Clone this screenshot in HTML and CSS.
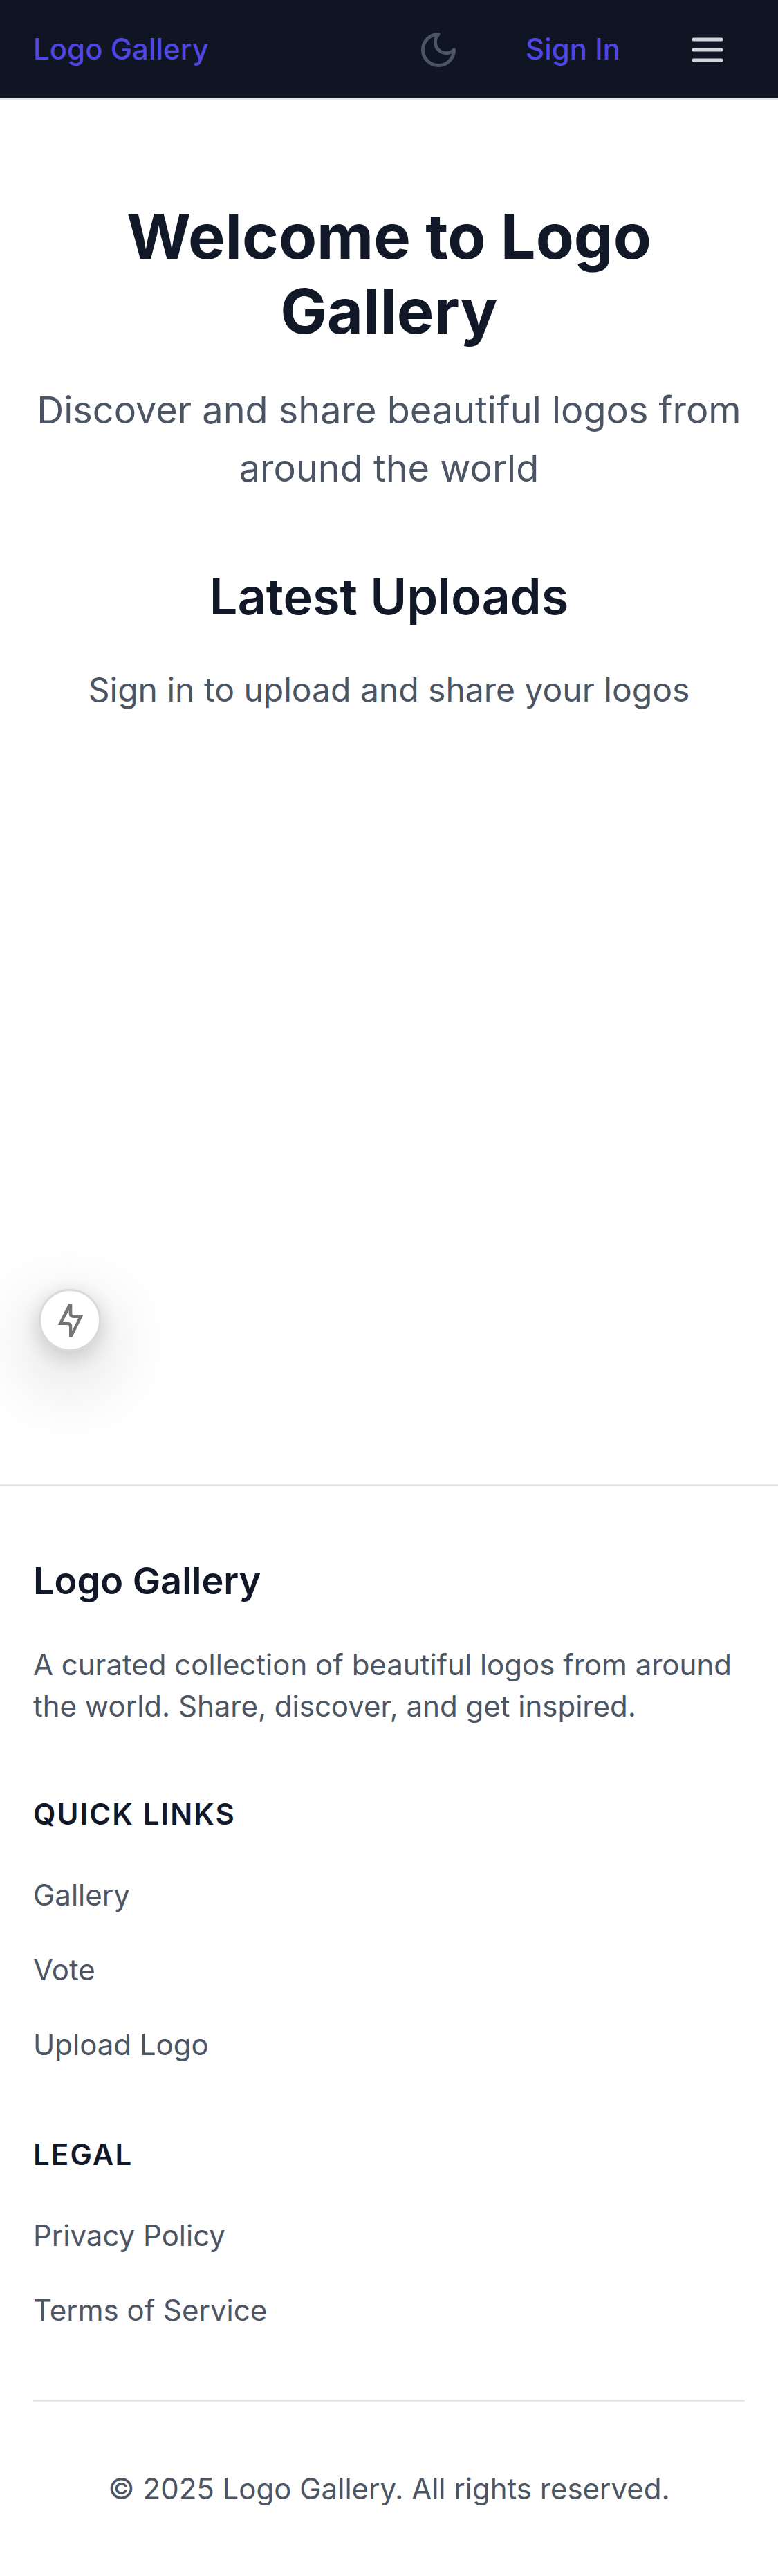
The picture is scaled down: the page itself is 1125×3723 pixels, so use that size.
FILE: index.html
```html
<!DOCTYPE html>
<html lang="en">
<head>
<meta charset="utf-8">
<title>Logo Gallery</title>
<link rel="stylesheet" href="styles.css">
</head>
<body>
<header class="header">
  <a class="brand">Logo Gallery</a>
  <nav class="nav">
    <svg class="icon moon" viewBox="0 0 24 24"><path d="M12 3a6 6 0 0 0 9 9 9 9 0 1 1-9-9Z"/></svg>
    <a class="signin">Sign In</a>
    <svg class="icon menu" viewBox="0 0 24 24"><path d="M4 6h16M4 12h16M4 18h16"/></svg>
  </nav>
</header>
<main class="main">
  <h1 class="title">Welcome to Logo Gallery</h1>
  <p class="lead">Discover and share beautiful logos from around the world</p>
  <h2 class="subtitle">Latest Uploads</h2>
  <p class="hint">Sign in to upload and share your logos</p>
</main>
<footer class="footer">
  <h3 class="footer-brand">Logo Gallery</h3>
  <p class="about">A curated collection of beautiful logos from around the world. Share, discover, and get inspired.</p>
  <h4 class="group">Quick Links</h4>
  <ul class="links"><li>Gallery</li><li>Vote</li><li>Upload Logo</li></ul>
  <h4 class="group">Legal</h4>
  <ul class="links"><li>Privacy Policy</li><li>Terms of Service</li></ul>
  <p class="copyright">© 2025 Logo Gallery. All rights reserved.</p>
</footer>
<div class="indicator">
  <svg class="bolt" viewBox="0 0 38 50"><path fill-rule="evenodd" d="M16.300 1H21.300V15.500Q21.300 17.700 23.500 17.700H37.300L21.700 49H17V34.500Q17 32 14.700 32H.700ZM16.700 11V15.500Q16.700 22 23.500 22H30.300L21.300 40.500V34.500Q21.300 27.700 14.700 27.700H7.700Z"/></svg>
</div>
</body>
</html>
```
FILE: styles.css
```css
* { box-sizing: border-box; margin: 0; padding: 0; }
body {
  font-family: Inter, "Liberation Sans", sans-serif;
  font-size: 42px;
  line-height: 60px;
  color: #4b5563;
  background: #fff;
  min-height: 3723px;
  display: flex;
  flex-direction: column;
}
.header {
  height: 144px;
  padding: 0 72px 0 48px;
  display: flex;
  align-items: center;
  justify-content: space-between;
  background: #0f1523;
  border-bottom: 3px solid #e5e7eb;
  color: #4f46e5;
  font-weight: 500;
}
.nav { display: flex; align-items: center; }
.icon { width: 60px; height: 60px; margin-top: 3px; fill: none; stroke-width: 2; stroke-linecap: round; stroke-linejoin: round; }
.moon { stroke: #4b5563; }
.signin { margin: 0 96px; }
.menu { stroke: #d1d5db; }
.main { height: 2001px; padding: 144px 48px 0; text-align: center; }
.title { font-size: 90px; line-height: 108px; font-weight: 700; color: #111827; }
.lead { font-size: 54px; line-height: 84px; margin-top: 46.5px; }
.subtitle { font-size: 72px; line-height: 96px; font-weight: 600; color: #111827; margin-top: 95px; }
.hint { font-size: 48px; line-height: 72px; margin-top: 51px; }
.footer { flex: 1; border-top: 3px solid #e5e7eb; padding: 94.5px 48px 0; }
.footer-brand { font-size: 54px; line-height: 84px; font-weight: 600; color: #111827; }
.about { margin-top: 49px; }
.group { font-size: 42px; font-weight: 600; letter-spacing: 2.1px; text-transform: uppercase; color: #111827; margin-top: 96px; }
.links { list-style: none; margin: 51px 0 93px; display: flex; flex-direction: column; gap: 36px; line-height: 72px; }
.links + .group { margin-top: 0; }
.links:last-of-type { margin-bottom: 93.5px; }
.copyright { text-align: center; padding-top: 95.5px; border-top: 3px solid #e5e7eb; }
.indicator {
  position: fixed;
  left: 56px;
  top: 1863px;
  width: 90px;
  height: 90px;
  border-radius: 50%;
  border: 3px solid #dadada;
  background: #fff;
  box-shadow: 0 33px 108px rgba(0, 0, 0, .25), 0 8px 32px rgba(0, 0, 0, .17);
}
.bolt { position: absolute; left: 24px; top: 17px; width: 38px; height: 50px; fill: #757575; }
```
